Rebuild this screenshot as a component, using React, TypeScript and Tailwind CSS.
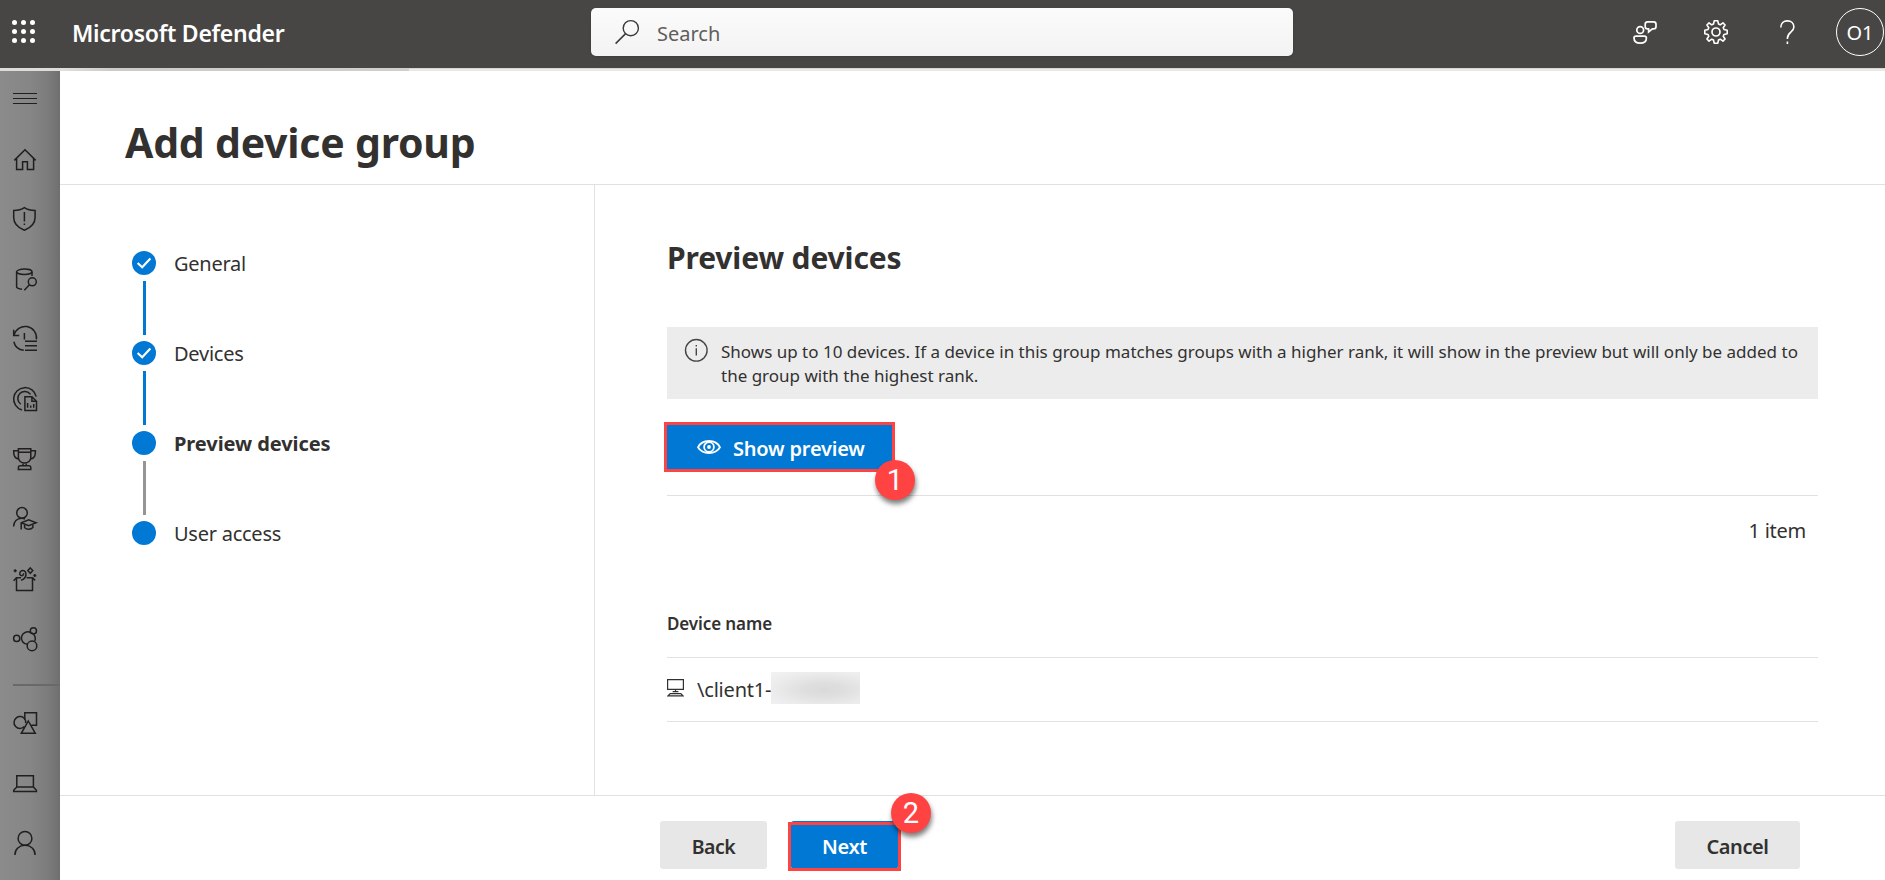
import React from "react";

type IconProps = { children: React.ReactNode; className?: string };

function Icon({ children, className = "" }: IconProps) {
  return (
    <svg
      width="24"
      height="24"
      viewBox="0 0 24 24"
      fill="none"
      stroke="currentColor"
      strokeWidth="1.5"
      className={`block shrink-0 overflow-visible ${className}`}
    >
      {children}
    </svg>
  );
}

const navTop = [
  {
    name: "menu",
    art: <path d="M0 6.5H24M0 11.5H24M0 16.5H24" strokeWidth="1" />,
  },
  {
    name: "home",
    art: (
      <path d="M1.3 13.4L12 2.8L22.7 13.4M3.6 11.2V22.4H9.6V14.8H14.4V22.4H20.6V11.2" />
    ),
  },
  {
    name: "incidents",
    art: (
      <>
        <path d="M11.4 0.7C8.8 2.5 4.6 3.5 0.7 3.5V10.5C0.7 16.5 5 20.7 11.4 23.3C17.8 20.7 22.1 16.5 22.1 10.5V3.5C18.2 3.5 14 2.5 11.4 0.7Z" />
        <path d="M11.4 5V14.6M11.4 16.4V18" />
      </>
    ),
  },
  {
    name: "hunting",
    art: (
      <>
        <ellipse cx="11.3" cy="4.8" rx="7.7" ry="2.7" />
        <path d="M3.6 4.8V19.8C3.6 21 6 21.9 9 22.2M19 4.8V9" />
        <circle cx="19.3" cy="14.8" r="4" />
        <path d="M16.4 17.7L11.3 23.2" />
      </>
    ),
  },
  {
    name: "history",
    art: (
      <>
        <path d="M0.7 2.8V8.4H6.2M1 8.2A11.4 11.4 0 0 1 23.4 12.3M0.8 14.8A11.4 11.4 0 0 0 10.8 23.3M11.4 6V12.4" />
        <path d="M12 14.3H24M12 18.8H24M12 23.3H24" />
      </>
    ),
  },
  {
    name: "threat analytics",
    art: (
      <>
        <path d="M23.2 9.6A11.4 11.4 0 1 0 9 23M17.5 7.4A7 7 0 1 0 7.8 17.2" />
        <path d="M11.9 9.7H18.9L23.5 14.3V23.4H11.9ZM18.9 9.7V14.3H23.5" />
        <path d="M14.6 16V20.8M17.7 18.6V20.8M20.7 17V20.8" />
      </>
    ),
  },
  {
    name: "secure score",
    art: (
      <path d="M5.4 1.8H17.8V10.6C17.8 13.8 15 16 11.6 16S5.4 13.8 5.4 10.6ZM5.4 5.2H17.8M5.4 3.7H0.7C0.4 8.8 2 11.6 5.6 12M17.8 3.7H22.4C22.7 8.8 21.1 11.6 17.6 12M10 16V18.8M13.2 16V18.8M5.4 22.4V20.6C5.4 19.4 6 18.8 7.2 18.8H16C17.2 18.8 17.8 19.4 17.8 20.6V22.4Z" />
    ),
  },
  {
    name: "learning hub",
    art: (
      <>
        <circle cx="9" cy="5.9" r="5.3" />
        <path d="M0.6 19.6C0.6 14.8 4 11.2 8.7 11.2C9.9 11.2 11 11.4 12 12M8.2 22.6V15.8L15.7 12.8L23.1 15.8L15.7 18.8L8.2 15.8M11.6 17.3V20.6C13.4 22.8 18 22.8 19.9 20.6V17.3" />
      </>
    ),
  },
  {
    name: "trials",
    art: (
      <>
        <path d="M8 10.8H3.5V23.4H19.5V10.8H13.6M3.5 10.8L0.6 13.7M19.5 10.8L22.2 13.4" />
        <path d="M8 13.4C11.6 12 13.4 9.2 12.9 6.1C12.5 3.7 9.8 2.8 8 4.1C6.2 5.4 6.4 8.1 8.2 8.6C9.8 9 11 7.6 10.4 6.3" />
        <path d="M17.3 0.9L19.8 3.6L17.3 6.3L14.8 3.6Z" />
        <path d="M2.2 2.2V5.2M0.7 3.7H3.7M21.8 6.9V9.9M20.3 8.4H23.3" />
      </>
    ),
  },
  {
    name: "partner catalog",
    art: (
      <>
        <circle cx="3.7" cy="11.4" r="3.1" />
        <path d="M18 5.9A6.2 6.2 0 1 0 14.5 17.3M18.9 5.9A6.2 6.2 0 0 1 21.7 14.1" />
        <circle cx="20.4" cy="3.8" r="3.1" />
        <circle cx="19" cy="18.9" r="4.8" />
      </>
    ),
  },
];

const navBottom = [
  {
    name: "assets",
    art: (
      <>
        <path d="M12 8.2A6 6 0 1 0 11.4 15.6" />
        <path d="M11.8 9V1.7H23.5V14.2H18.2M11.8 7.8C12.6 9 12.9 10.6 12.6 12.2" />
        <path d="M15.3 10L22.3 22.3H8.3Z" />
      </>
    ),
  },
  {
    name: "devices",
    art: (
      <path d="M3.8 4.8H20.4V16H3.8ZM3.8 16L0.7 19.2V20.4H23.4V19.2L20.4 16" />
    ),
  },
  {
    name: "identities",
    art: (
      <>
        <circle cx="12" cy="7.4" r="6.9" />
        <path d="M1.9 24C1.9 18.2 6.2 14.3 12 14.3S22.1 18.2 22.1 24" />
      </>
    ),
  },
];

const steps = [
  { label: "General", done: true, current: false },
  { label: "Devices", done: true, current: false },
  { label: "Preview devices", done: false, current: true },
  { label: "User access", done: false, current: false },
];

function Header() {
  return (
    <header className="flex h-[68px] shrink-0 items-center bg-[#484644] pb-1 text-white">
      <svg width="24" height="24" viewBox="0 0 24 24" fill="currentColor" className="ml-3 block shrink-0">
        {[2.5, 11.5, 20.5].map((y) =>
          [2.5, 11.5, 20.5].map((x) => <circle key={`${x}-${y}`} cx={x} cy={y} r="2.5" />)
        )}
      </svg>
      <div className="ml-9 w-[519px] pt-[2px] text-[23px] leading-8 font-semibold tracking-[-0.27px]">
        Microsoft Defender
      </div>
      <div className="flex h-12 w-[702px] shrink-0 items-center rounded-[5px] bg-gradient-to-b from-[#fbfbfb] to-[#f3f3f3] pl-6 shadow-sm">
        <Icon className="text-[#3b3a39]">
          <circle cx="15.8" cy="8.2" r="7.6" strokeWidth="1.4" />
          <path d="M10.6 13.6L0.6 23.6" strokeWidth="1.5" />
        </Icon>
        <span className="pt-1 pl-[18px] text-[20px] leading-7 text-[#605e5c]">Search</span>
      </div>
      <div className="ml-auto flex items-center pr-px">
        <Icon className="mr-[47px]">
          <g strokeWidth="1.7">
            <circle cx="7.2" cy="10" r="3.4" />
            <path d="M3 16.2H11.4C12.7 16.2 13.4 16.9 13.4 18C13.4 21.4 10.8 23.2 7.2 23.2S1 21.4 1 18C1 16.9 1.7 16.2 3 16.2Z" />
            <path d="M14.6 1.8H20.6C22.2 1.8 23 2.6 23 4.2V6.4C23 8 22.2 8.8 20.6 8.8H19.4L15.6 12V8.8H14.6C13 8.8 12.2 8 12.2 6.4V4.2C12.2 2.6 13 1.8 14.6 1.8Z" />
          </g>
        </Icon>
        <Icon className="mr-[50px]">
          <path
            strokeWidth="1.6"
            strokeLinejoin="round"
            d="M10.2 0.8L9.5 4L7.7 4.8L5 2.9L2.9 5L4.8 7.7L4 9.5L0.8 10.2V13.8L4 14.5L4.8 16.3L2.9 19L5 21.1L7.7 19.2L9.5 20L10.2 23.2H13.8L14.5 20L16.3 19.2L19 21.1L21.1 19L19.2 16.3L20 14.5L23.2 13.8V10.2L20 9.5L19.2 7.7L21.1 5L19 2.9L16.3 4.8L14.5 4L13.8 0.8Z"
          />
          <circle cx="12" cy="12" r="4" strokeWidth="1.7" />
        </Icon>
        <Icon className="mr-[34px]">
          <path
            strokeWidth="1.6"
            d="M2.8 7.4C2.8 3.4 5.6 0.9 9.4 0.9C13.2 0.9 15.9 3.2 15.9 6.9C15.9 12.2 9.4 12 9.4 18.2V19M9.4 21.6V24"
          />
        </Icon>
        <div className="flex size-12 items-center justify-center rounded-full border border-white pt-0.5 text-[20px] leading-6">
          O1
        </div>
      </div>
    </header>
  );
}

function Sidebar() {
  return (
    <nav className="flex w-[60px] shrink-0 flex-col bg-linear-[90deg,#8b8b8b_0%,#868686_50%,#7c7c7c_80%,#6f6f6f_100%] pt-4 text-[#201f1e]">
      <div className="flex flex-col gap-9 pl-[13px]">
        {navTop.map((n) => (
          <Icon key={n.name}>{n.art}</Icon>
        ))}
      </div>
      <div className="mt-[33px] ml-[13px] h-[2px] bg-[#696969]" />
      <div className="mt-[25px] flex flex-col gap-9 pl-[13px]">
        {navBottom.map((n) => (
          <Icon key={n.name}>{n.art}</Icon>
        ))}
      </div>
    </nav>
  );
}

function Steps() {
  return (
    <ol className="w-[535px] shrink-0 border-r border-[#e1e1e1] pt-[66px] pl-[72px]">
      {steps.map((s, i) => (
        <li key={s.label}>
          <div className="flex items-center gap-[18px]">
            <span className="flex size-6 items-center justify-center rounded-full bg-[#0078d4]">
              {s.done && (
                <svg width="24" height="24" viewBox="0 0 24 24" fill="none" stroke="white" strokeWidth="2.2">
                  <path d="M5.6 12L10.2 16.2L18.4 7.6" />
                </svg>
              )}
            </span>
            <span
              className={
                s.current
                  ? "pt-0.5 text-[20px] leading-[22px] font-bold tracking-[-0.07px]"
                  : "pt-0.5 text-[20px] leading-[22px] tracking-[-0.25px]"
              }
            >
              {s.label}
            </span>
          </div>
          {i < steps.length - 1 && (
            <div className={`my-1.5 ml-[11px] h-[54px] w-[3px] ${s.done ? "bg-[#0078d4]" : "bg-[#979593]"}`} />
          )}
        </li>
      ))}
    </ol>
  );
}

function Badge({ n, className }: { n: number; className: string }) {
  return (
    <span
      className={`absolute flex size-10 items-center justify-center rounded-full bg-[#ff4343] font-[Roboto,Arial,sans-serif] text-[29px] leading-none font-normal text-white shadow-[1px_4px_5px_rgba(0,0,0,0.5)] ${className}`}
    >
      {n}
    </span>
  );
}

function PreviewDevices() {
  return (
    <section className="flex-1 pt-[53px] pr-[67px] pl-[72px]">
      <h2 className="text-[30px] leading-10 font-bold tracking-[-0.13px]">Preview devices</h2>
      <div className="mt-[49px] flex h-[72px] bg-[#ececec] pt-[13px] pl-[17px]">
        <svg width="24" height="24" viewBox="0 0 24 24" fill="none" stroke="#484644" strokeWidth="1.4" className="-mt-0.5 block shrink-0">
          <circle cx="12.3" cy="12.3" r="10.8" />
          <path d="M12.3 10.3V17.6M12.3 7V8.6" />
        </svg>
        <p className="ml-[13px] w-[1085px] text-[17px] leading-6">
          Shows up to 10 devices. If a device in this group matches groups with a higher rank, it will show in the preview but will only be added to the group with the highest rank.
        </p>
      </div>
      <div className="relative mt-[26px] w-[225px]">
        <button className="flex h-11 w-full items-center bg-[#0078d4] pl-[30px] text-[20px] leading-6 font-semibold tracking-[-0.2px] text-white outline-3 outline-[#ff4343]">
          <svg width="24" height="14" viewBox="0 0 24 14" fill="none" stroke="white" strokeWidth="1.8" className="block shrink-0">
            <path d="M1 7.3C3 3.2 7 1 12 1S21 3.2 23 7.3C21 10.8 17 13 12 13S3 10.8 1 7.3Z" />
            <circle cx="12" cy="7" r="4.9" />
            <circle cx="12" cy="7" r="1.9" fill="white" stroke="none" />
          </svg>
          <span className="ml-3 pt-[3px]">Show preview</span>
        </button>
        <Badge n={1} className="top-[35px] left-[208px]" />
      </div>
      <div className="mt-[26px] border-t border-[#e1e1e1] pt-[21px] pr-3 text-right text-[20px] leading-7 tracking-[-0.25px]">
        1 item
      </div>
      <div className="mt-[67px] border-b border-[#e1e1e1] pb-[21px] text-[17px] leading-6 font-semibold tracking-[-0.1px]">
        Device name
      </div>
      <div className="flex h-16 items-center border-b border-[#e1e1e1]">
        <svg width="17" height="18" viewBox="0 0 17 18" fill="none" stroke="#323130" strokeWidth="1.2" className="-mt-1 block shrink-0">
          <path d="M0.6 0.6H16.4V10.4H0.6ZM8.5 10.4V12.6M5.6 12.6H11.4M3.2 14.6H13.8L16 16.8H1Z" />
        </svg>
        <span className="ml-[13px] w-[74px] text-[20px] leading-7 tracking-[-0.2px]">\client1-</span>
        <span className="mb-[3px] h-8 w-[89px] bg-[radial-gradient(ellipse_at_60%_55%,#dadada_0%,#dedede_25%,#ebebeb_65%,#f3f3f3_100%)]" />
      </div>
    </section>
  );
}

function Footer() {
  return (
    <footer className="flex h-[85px] shrink-0 border-t border-[#e1e1e1] pt-[25px] pr-[85px] pl-[600px] text-[20px] leading-6 font-semibold">
      <button className="h-12 w-[107px] rounded-[3px] bg-[#e7e7e7] pt-[3px] text-[19.5px] tracking-[-0.5px]">Back</button>
      <div className="relative ml-6">
        <button className="h-12 w-[107px] rounded-[3px] bg-[#0078d4] pt-[3px] tracking-[-0.4px] text-white">Next</button>
        <span className="absolute -inset-x-[3px] top-px h-[49px] border-3 border-[#ff4343]" />
        <Badge n={2} className="-top-7 left-[100px]" />
      </div>
      <button className="ml-auto h-12 w-[125px] rounded-[3px] bg-[#e7e7e7] pt-[3px] tracking-[-0.4px]">Cancel</button>
    </footer>
  );
}

export default function App() {
  return (
    <div className="flex h-[880px] w-[1885px] flex-col overflow-hidden bg-white font-['Noto_Sans','Open_Sans',sans-serif] text-[#323130]">
      <Header />
      <div className="flex h-[3px] shrink-0">
        <div className="w-[60px] bg-[#dcdcda]" />
        <div className="w-[349px] bg-linear-[90deg,#e0e0e0_0%,#cbcbcb_15%,#cfcfcf_100%]" />
        <div className="flex-1 border-t border-[#d8d5d2] bg-[#ebe9e8]" />
      </div>
      <div className="flex min-h-0 flex-1">
        <Sidebar />
        <main className="flex min-w-0 flex-1 flex-col">
          <h1 className="h-[114px] shrink-0 border-b border-[#e1e1e1] pt-[46px] pl-[65px] text-[41px] leading-[50px] font-bold tracking-[-0.22px]">
            Add device group
          </h1>
          <div className="flex min-h-0 flex-1">
            <Steps />
            <PreviewDevices />
          </div>
          <Footer />
        </main>
      </div>
    </div>
  );
}
